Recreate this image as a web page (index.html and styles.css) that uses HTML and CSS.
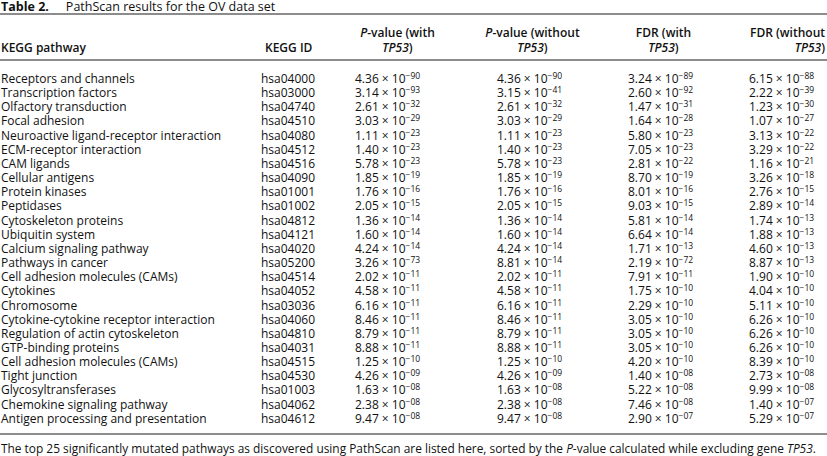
FILE: index.html
```html
<!DOCTYPE html>
<html>
<head>
<meta charset="utf-8">
<link rel="stylesheet" href="styles.css">
</head>
<body>
<div class="page">
  <div class="title"><span class="label">Table 2.</span>PathScan results for the OV data set</div>
  <table class="results">
    <colgroup>
      <col class="w-path"><col class="w-id"><col class="w-p1"><col class="w-p2"><col class="w-f1"><col class="w-f2">
    </colgroup>
    <thead>
      <tr>
        <th class="h-left">KEGG pathway</th>
        <th class="h-id">KEGG ID</th>
        <th class="h-p1"><i>P</i>-value (with<br><i>TP53</i>)</th>
        <th class="h-p2"><i>P</i>-value (without<br><i>TP53</i>)</th>
        <th class="h-f1">FDR (with<br><i>TP53</i>)</th>
        <th class="h-f2">FDR (without<br><i>TP53</i>)</th>
      </tr>
    </thead>
    <tbody>
      <tr class="first"><td>Receptors and channels</td><td class="id">hsa04000</td><td class="v1">4.36 × 10<sup>−90</sup></td><td class="v2">4.36 × 10<sup>−90</sup></td><td class="v3">3.24 × 10<sup>−89</sup></td><td class="v4">6.15 × 10<sup>−88</sup></td></tr>
      <tr><td>Transcription factors</td><td class="id">hsa03000</td><td class="v1">3.14 × 10<sup>−93</sup></td><td class="v2">3.15 × 10<sup>−41</sup></td><td class="v3">2.60 × 10<sup>−92</sup></td><td class="v4">2.22 × 10<sup>−39</sup></td></tr>
      <tr><td>Olfactory transduction</td><td class="id">hsa04740</td><td class="v1">2.61 × 10<sup>−32</sup></td><td class="v2">2.61 × 10<sup>−32</sup></td><td class="v3">1.47 × 10<sup>−31</sup></td><td class="v4">1.23 × 10<sup>−30</sup></td></tr>
      <tr><td>Focal adhesion</td><td class="id">hsa04510</td><td class="v1">3.03 × 10<sup>−29</sup></td><td class="v2">3.03 × 10<sup>−29</sup></td><td class="v3">1.64 × 10<sup>−28</sup></td><td class="v4">1.07 × 10<sup>−27</sup></td></tr>
      <tr><td>Neuroactive ligand-receptor interaction</td><td class="id">hsa04080</td><td class="v1">1.11 × 10<sup>−23</sup></td><td class="v2">1.11 × 10<sup>−23</sup></td><td class="v3">5.80 × 10<sup>−23</sup></td><td class="v4">3.13 × 10<sup>−22</sup></td></tr>
      <tr><td>ECM-receptor interaction</td><td class="id">hsa04512</td><td class="v1">1.40 × 10<sup>−23</sup></td><td class="v2">1.40 × 10<sup>−23</sup></td><td class="v3">7.05 × 10<sup>−23</sup></td><td class="v4">3.29 × 10<sup>−22</sup></td></tr>
      <tr><td>CAM ligands</td><td class="id">hsa04516</td><td class="v1">5.78 × 10<sup>−23</sup></td><td class="v2">5.78 × 10<sup>−23</sup></td><td class="v3">2.81 × 10<sup>−22</sup></td><td class="v4">1.16 × 10<sup>−21</sup></td></tr>
      <tr><td>Cellular antigens</td><td class="id">hsa04090</td><td class="v1">1.85 × 10<sup>−19</sup></td><td class="v2">1.85 × 10<sup>−19</sup></td><td class="v3">8.70 × 10<sup>−19</sup></td><td class="v4">3.26 × 10<sup>−18</sup></td></tr>
      <tr><td>Protein kinases</td><td class="id">hsa01001</td><td class="v1">1.76 × 10<sup>−16</sup></td><td class="v2">1.76 × 10<sup>−16</sup></td><td class="v3">8.01 × 10<sup>−16</sup></td><td class="v4">2.76 × 10<sup>−15</sup></td></tr>
      <tr><td>Peptidases</td><td class="id">hsa01002</td><td class="v1">2.05 × 10<sup>−15</sup></td><td class="v2">2.05 × 10<sup>−15</sup></td><td class="v3">9.03 × 10<sup>−15</sup></td><td class="v4">2.89 × 10<sup>−14</sup></td></tr>
      <tr><td>Cytoskeleton proteins</td><td class="id">hsa04812</td><td class="v1">1.36 × 10<sup>−14</sup></td><td class="v2">1.36 × 10<sup>−14</sup></td><td class="v3">5.81 × 10<sup>−14</sup></td><td class="v4">1.74 × 10<sup>−13</sup></td></tr>
      <tr><td>Ubiquitin system</td><td class="id">hsa04121</td><td class="v1">1.60 × 10<sup>−14</sup></td><td class="v2">1.60 × 10<sup>−14</sup></td><td class="v3">6.64 × 10<sup>−14</sup></td><td class="v4">1.88 × 10<sup>−13</sup></td></tr>
      <tr><td>Calcium signaling pathway</td><td class="id">hsa04020</td><td class="v1">4.24 × 10<sup>−14</sup></td><td class="v2">4.24 × 10<sup>−14</sup></td><td class="v3">1.71 × 10<sup>−13</sup></td><td class="v4">4.60 × 10<sup>−13</sup></td></tr>
      <tr><td>Pathways in cancer</td><td class="id">hsa05200</td><td class="v1">3.26 × 10<sup>−73</sup></td><td class="v2">8.81 × 10<sup>−14</sup></td><td class="v3">2.19 × 10<sup>−72</sup></td><td class="v4">8.87 × 10<sup>−13</sup></td></tr>
      <tr><td>Cell adhesion molecules (CAMs)</td><td class="id">hsa04514</td><td class="v1">2.02 × 10<sup>−11</sup></td><td class="v2">2.02 × 10<sup>−11</sup></td><td class="v3">7.91 × 10<sup>−11</sup></td><td class="v4">1.90 × 10<sup>−10</sup></td></tr>
      <tr><td>Cytokines</td><td class="id">hsa04052</td><td class="v1">4.58 × 10<sup>−11</sup></td><td class="v2">4.58 × 10<sup>−11</sup></td><td class="v3">1.75 × 10<sup>−10</sup></td><td class="v4">4.04 × 10<sup>−10</sup></td></tr>
      <tr><td>Chromosome</td><td class="id">hsa03036</td><td class="v1">6.16 × 10<sup>−11</sup></td><td class="v2">6.16 × 10<sup>−11</sup></td><td class="v3">2.29 × 10<sup>−10</sup></td><td class="v4">5.11 × 10<sup>−10</sup></td></tr>
      <tr><td>Cytokine-cytokine receptor interaction</td><td class="id">hsa04060</td><td class="v1">8.46 × 10<sup>−11</sup></td><td class="v2">8.46 × 10<sup>−11</sup></td><td class="v3">3.05 × 10<sup>−10</sup></td><td class="v4">6.26 × 10<sup>−10</sup></td></tr>
      <tr><td>Regulation of actin cytoskeleton</td><td class="id">hsa04810</td><td class="v1">8.79 × 10<sup>−11</sup></td><td class="v2">8.79 × 10<sup>−11</sup></td><td class="v3">3.05 × 10<sup>−10</sup></td><td class="v4">6.26 × 10<sup>−10</sup></td></tr>
      <tr><td>GTP-binding proteins</td><td class="id">hsa04031</td><td class="v1">8.88 × 10<sup>−11</sup></td><td class="v2">8.88 × 10<sup>−11</sup></td><td class="v3">3.05 × 10<sup>−10</sup></td><td class="v4">6.26 × 10<sup>−10</sup></td></tr>
      <tr><td>Cell adhesion molecules (CAMs)</td><td class="id">hsa04515</td><td class="v1">1.25 × 10<sup>−10</sup></td><td class="v2">1.25 × 10<sup>−10</sup></td><td class="v3">4.20 × 10<sup>−10</sup></td><td class="v4">8.39 × 10<sup>−10</sup></td></tr>
      <tr><td>Tight junction</td><td class="id">hsa04530</td><td class="v1">4.26 × 10<sup>−09</sup></td><td class="v2">4.26 × 10<sup>−09</sup></td><td class="v3">1.40 × 10<sup>−08</sup></td><td class="v4">2.73 × 10<sup>−08</sup></td></tr>
      <tr><td>Glycosyltransferases</td><td class="id">hsa01003</td><td class="v1">1.63 × 10<sup>−08</sup></td><td class="v2">1.63 × 10<sup>−08</sup></td><td class="v3">5.22 × 10<sup>−08</sup></td><td class="v4">9.99 × 10<sup>−08</sup></td></tr>
      <tr><td>Chemokine signaling pathway</td><td class="id">hsa04062</td><td class="v1">2.38 × 10<sup>−08</sup></td><td class="v2">2.38 × 10<sup>−08</sup></td><td class="v3">7.46 × 10<sup>−08</sup></td><td class="v4">1.40 × 10<sup>−07</sup></td></tr>
      <tr class="last"><td>Antigen processing and presentation</td><td class="id">hsa04612</td><td class="v1">9.47 × 10<sup>−08</sup></td><td class="v2">9.47 × 10<sup>−08</sup></td><td class="v3">2.90 × 10<sup>−07</sup></td><td class="v4">5.29 × 10<sup>−07</sup></td></tr>
    </tbody>
  </table>
  <p class="caption">The top 25 significantly mutated pathways as discovered using PathScan are listed here, sorted by the <i>P</i>-value calculated while excluding gene <i>TP53</i>.</p>
</div>
</body>
</html>
```

FILE: styles.css
```css
html, body {
  margin: 0;
  padding: 0;
  background: #ffffff;
}

.page {
  width: 827px;
  height: 456px;
  overflow: hidden;
  font-family: "Open Sans", "Noto Sans", sans-serif;
  font-size: 12px;
  color: #111111;
}

.title {
  font-size: 12.5px;
  line-height: 14px;
  height: 13px;
  padding-left: 1px;
}

.title .label {
  font-weight: 700;
  margin-right: 17px;
}

.results {
  width: 827px;
  border-collapse: collapse;
  table-layout: fixed;
  margin: 0;
}

.w-path { width: 255px; }
.w-id { width: 75px; }
.w-p1 { width: 135px; }
.w-p2 { width: 135px; }
.w-f1 { width: 127px; }
.w-f2 { width: 100px; }

.results thead tr {
  border-top: 2px solid #8c8c8c;
  border-bottom: 2px solid #8c8c8c;
}

.results th {
  font-weight: 600;
  line-height: 15px;
  vertical-align: bottom;
  padding: 10px 0 4px 0;
  text-align: center;
  white-space: nowrap;
}

.results th i {
  font-weight: 600;
}

.results th.h-left {
  text-align: left;
  padding-left: 1px;
}

.results th.h-id { padding-left: 10px; text-align: left; }
.results th.h-f2 { text-align: right; padding-right: 2px; }

.results td {
  line-height: 14.15px;
  height: 14.15px;
  padding: 0;
  white-space: nowrap;
  vertical-align: middle;
}

.results td:first-child {
  padding-left: 1px;
}

.results tr.first td {
  padding-top: 11px;
}

.results tr.last td {
  padding-bottom: 7px;
}

.results tbody tr.last {
  border-bottom: 2px solid #8c8c8c;
}

.results td.id { padding-left: 6px; }
.results td.v1 { padding-left: 25px; }
.results td.v2 { padding-left: 32px; }
.results td.v3 { padding-left: 28px; }
.results td.v4 { padding-left: 22px; }

.results sup {
  font-size: 8.5px;
  line-height: 0;
  vertical-align: 4px;
}

.caption {
  margin: 6px 0 0 0;
  padding-left: 1px;
  line-height: 14px;
  font-size: 11.9px;
  white-space: nowrap;
}
```
